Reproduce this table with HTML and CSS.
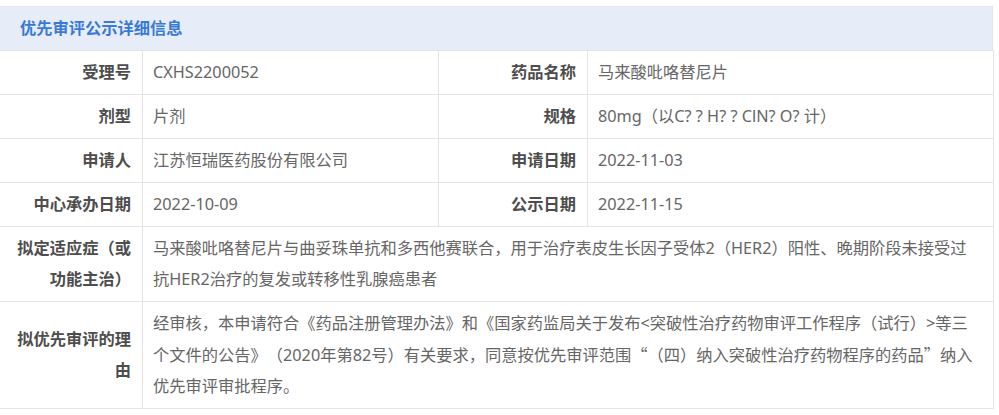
FILE: index.html
```html
<!DOCTYPE html>
<html lang="zh-CN">
<head>
<meta charset="utf-8">
<title>优先审评公示详细信息</title>
<link rel="stylesheet" href="styles.css">
</head>
<body>
<div class="panel">
  <div class="panel-head">优先审评公示详细信息</div>
  <table class="info">
    <colgroup>
      <col class="c-label1">
      <col class="c-value1">
      <col class="c-label2">
      <col class="c-value2">
    </colgroup>
    <tbody>
      <tr>
        <th>受理号</th>
        <td>CXHS2200052</td>
        <th>药品名称</th>
        <td>马来酸吡咯替尼片</td>
      </tr>
      <tr>
        <th>剂型</th>
        <td>片剂</td>
        <th>规格</th>
        <td>80mg（以C? ? H? ? ClN? O? 计）</td>
      </tr>
      <tr>
        <th>申请人</th>
        <td>江苏恒瑞医药股份有限公司</td>
        <th>申请日期</th>
        <td>2022-11-03</td>
      </tr>
      <tr>
        <th>中心承办日期</th>
        <td>2022-10-09</td>
        <th>公示日期</th>
        <td>2022-11-15</td>
      </tr>
      <tr>
        <th>拟定适应症（或功能主治）</th>
        <td colspan="3" class="long">马来酸吡咯替尼片与曲妥珠单抗和多西他赛联合，用于治疗表皮生长因子受体2（HER2）阳性、晚期阶段未接受过抗HER2治疗的复发或转移性乳腺癌患者</td>
      </tr>
      <tr>
        <th>拟优先审评的理由</th>
        <td colspan="3" class="long">经审核，本申请符合《药品注册管理办法》和《国家药监局关于发布&lt;突破性治疗药物审评工作程序（试行）&gt;等三个文件的公告》（2020年第82号）有关要求，同意按优先审评范围<span class="cjk">“</span>（四）纳入突破性治疗药物程序的药品<span class="cjk">”</span>纳入优先审评审批程序。</td>
      </tr>
    </tbody>
  </table>
</div>
</body>
</html>
```

FILE: styles.css
```css
html, body {
  margin: 0;
  padding: 0;
  background: #ffffff;
}

body {
  font-family: "Noto Sans", "Noto Sans CJK SC", sans-serif;
  font-size: 16.25px;
  color: #666666;
  text-spacing-trim: space-all;
}

.cjk {
  font-family: "Noto Sans CJK SC", sans-serif;
}

.panel {
  width: 994px;
  margin: 6px 0 0 -1px;
}

.panel-head {
  height: 43px;
  line-height: 43px;
  padding-left: 20px;
  background: #e6ecf8;
  border: 1px solid #e3e6ec;
  border-bottom: none;
  color: #3a7ad6;
  font-weight: bold;
}

.info {
  width: 994px;
  border-collapse: collapse;
  table-layout: fixed;
}

.c-label1 { width: 143px; }
.c-value1 { width: 296px; }
.c-label2 { width: 149px; }
.c-value2 { width: 406px; }

.info th,
.info td {
  border: 1px solid #e4e4e4;
  line-height: 31px;
  padding: 6px 10px;
  vertical-align: middle;
}

.info th {
  text-align: right;
  font-weight: bold;
  color: #4d4d4d;
  padding-left: 12px;
  padding-right: 11px;
}

.info td {
  text-align: left;
  color: #666666;
  padding-left: 10px;
}

.info td.long {
  padding-right: 16px;
}
```
